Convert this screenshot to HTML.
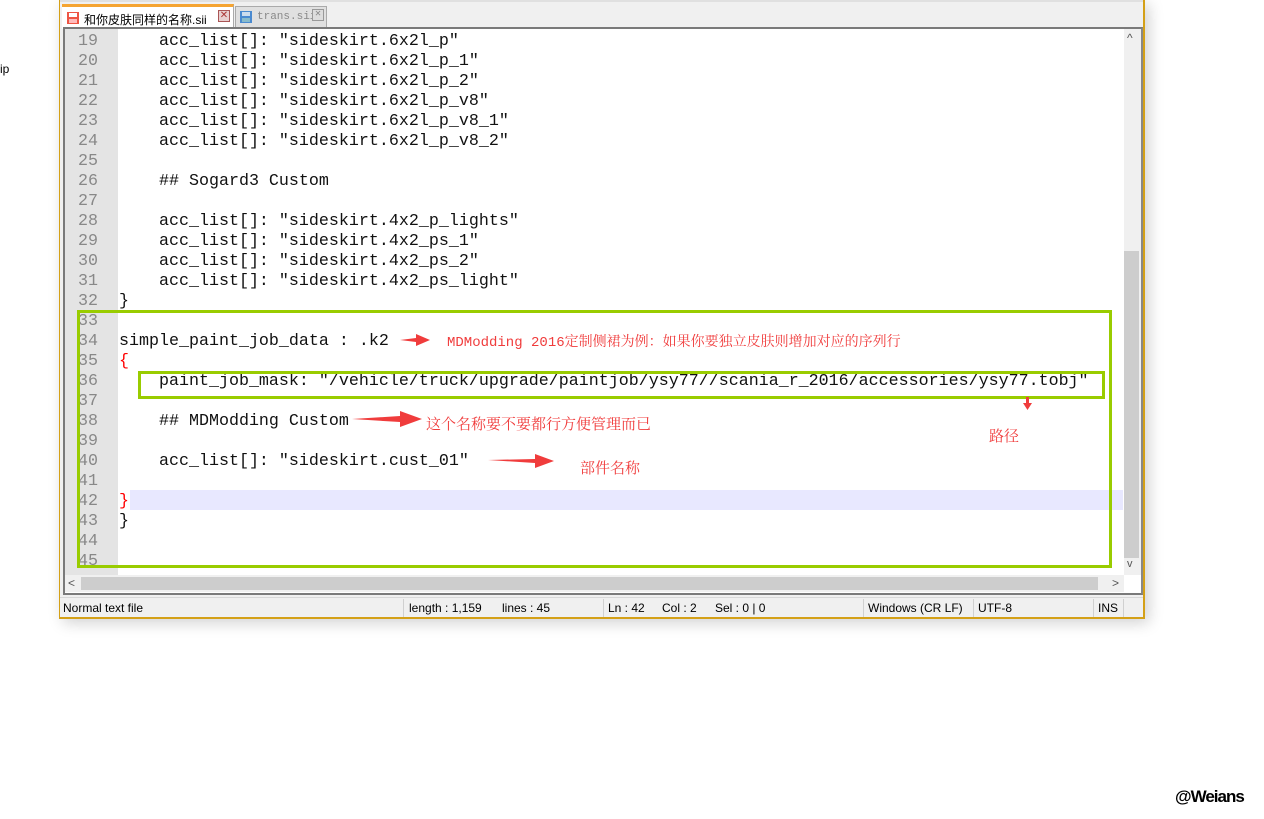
<!DOCTYPE html>
<html><head><meta charset="utf-8"><style>
*{margin:0;padding:0;box-sizing:border-box}
body{width:1264px;height:819px;background:#fff;position:relative;overflow:hidden;font-family:"Liberation Sans","Noto Sans CJK SC",sans-serif}
.win{position:absolute;left:59px;top:0;width:1086px;height:619px;background:#f0f0f0;border-left:1px solid #d4a017;border-right:2px solid #d4a017;border-bottom:2px solid #d4a017;box-shadow:4px 4px 14px rgba(0,0,0,.18)}
.tab1{position:absolute;left:62px;top:4px;width:172px;height:25px;background:#fff;border-top:3px solid #f5a431;border-right:1px solid #aaa;font-size:12px;color:#000}
.tab2{position:absolute;left:235px;top:6px;width:92px;height:22px;background:#e0e0e0;border:1px solid #aaa;font-family:"Liberation Mono",monospace;font-size:11px;color:#888}
.frame{position:absolute;left:63px;top:27px;width:1080px;height:568px;border:2px solid #7a7a7a;border-right-color:#888;background:#fff}
.gut{position:absolute;left:65px;top:29px;width:53px;height:546px;background:#e4e4e4}
.ln{position:absolute;font-family:"Liberation Mono",monospace;font-size:16.67px;line-height:20px;white-space:pre;color:#111}
.num{color:#888;left:78px}
.code{left:119px}
.hl{position:absolute;left:130px;top:490px;width:993px;height:20px;background:#e8e8ff}
.vs{position:absolute;left:1124px;top:29px;width:17px;height:546px;background:#f0f0f0}
.th{position:absolute;left:1124px;top:251px;width:15px;height:307px;background:#cdcdcd}
.hs{position:absolute;left:65px;top:575px;width:1059px;height:17px;background:#f0f0f0}
.hth{position:absolute;left:81px;top:577px;width:1017px;height:13px;background:#cdcdcd}
.status{position:absolute;left:60px;top:597px;width:1083px;height:20px;font-size:12px;color:#000;border-top:1px solid #d8d8d8}
.status span{position:absolute;top:3px}
.sep{position:absolute;top:1px;width:1px;height:18px;background:#d0d0d0}
.box{position:absolute;border:3px solid #99cc00}
.red{position:absolute;color:#f03c3c;font-size:14px;font-family:"Liberation Mono","Noto Serif CJK SC",serif;white-space:nowrap}
</style></head><body>
<div style="position:absolute;left:0;top:62px;font-size:12px">ip</div>
<div class="win"></div>
<div style="position:absolute;left:60px;top:0;width:1083px;height:2px;background:#e0e0e0"></div>
<div class="tab1"><svg style="position:absolute;left:4px;top:4px" width="14" height="14"><rect x="1" y="1" width="12" height="12" fill="#e54" /><rect x="3" y="2" width="8" height="4" fill="#fff"/><rect x="3" y="8" width="8" height="4" fill="#fbb"/></svg><span style="position:absolute;left:22px;top:4px">和你皮肤同样的名称.sii</span><span style="position:absolute;left:156px;top:3px;width:12px;height:12px;border:1px solid #a55;background:#e8d0d0;font-size:10px;line-height:10px;text-align:center;color:#a33">✕</span></div>
<div class="tab2"><svg style="position:absolute;left:3px;top:3px" width="14" height="14"><rect x="1" y="1" width="12" height="12" fill="#4a8ad0"/><rect x="3" y="2" width="8" height="4" fill="#cde"/><rect x="3" y="8" width="8" height="4" fill="#8bc"/></svg><span style="position:absolute;left:21px;top:4px">trans.sii</span><span style="position:absolute;left:76px;top:2px;width:12px;height:12px;border:1px solid #999;background:#ddd;font-size:10px;line-height:10px;text-align:center;color:#888">✕</span></div>
<div class="frame"></div>
<div class="gut"></div>
<div class="hl"></div>
<div class="vs"></div><div class="th"></div>
<div style="position:absolute;left:1127px;top:31px;font-size:12px;color:#555">^</div>
<div style="position:absolute;left:1127px;top:558px;font-size:11px;color:#555">v</div>
<div class="hs"></div><div class="hth"></div>
<div style="position:absolute;left:68px;top:576px;font-size:12px;color:#555">&lt;</div>
<div style="position:absolute;left:1112px;top:576px;font-size:12px;color:#555">&gt;</div>
<div class="ln num" style="top:32px">19
20
21
22
23
24
25
26
27
28
29
30
31
32
33
34
35
36
37
38
39
40
41
42
43
44
45</div>
<div class="ln code" style="top:32px">    acc_list[]: "sideskirt.6x2l_p"
    acc_list[]: "sideskirt.6x2l_p_1"
    acc_list[]: "sideskirt.6x2l_p_2"
    acc_list[]: "sideskirt.6x2l_p_v8"
    acc_list[]: "sideskirt.6x2l_p_v8_1"
    acc_list[]: "sideskirt.6x2l_p_v8_2"

    ## Sogard3 Custom

    acc_list[]: "sideskirt.4x2_p_lights"
    acc_list[]: "sideskirt.4x2_ps_1"
    acc_list[]: "sideskirt.4x2_ps_2"
    acc_list[]: "sideskirt.4x2_ps_light"
}

simple_paint_job_data : .k2
<span style="color:#f00">{</span>
    paint_job_mask: "/vehicle/truck/upgrade/paintjob/ysy77//scania_r_2016/accessories/ysy77.tobj"

    ## MDModding Custom

    acc_list[]: "sideskirt.cust_01"

<span style="color:#f00">}</span>
}</div>
<div class="box" style="left:77px;top:310px;width:1035px;height:258px"></div>
<div class="box" style="left:138px;top:371px;width:967px;height:28px"></div>
<svg style="position:absolute;left:0;top:0" width="1264" height="819">
<g fill="#f03c3c">
<path d="M400 340 L416 338 L416 334 L430 340 L416 346 L416 342 Z"/>
<path d="M352 419 L400 416 L400 411 L422 419 L400 427 L400 422 Z"/>
<path d="M488 460 L535 459 L535 454 L554 461 L535 468 L535 463 Z"/>
<path d="M1026 397 L1029 397 L1029 403 L1032 403 L1027.5 410 L1023 403 L1026 403 Z"/>
</g></svg>
<div class="red" style="left:447px;top:331px">MDModding 2016定制侧裙为例：如果你要独立皮肤则增加对应的序列行</div>
<div class="red" style="left:426px;top:413px;font-size:15px">这个名称要不要都行方便管理而已</div>
<div class="red" style="left:989px;top:425px;font-size:15px">路径</div>
<div class="red" style="left:580px;top:457px;font-size:15px">部件名称</div>
<div class="status">
<span style="left:3px">Normal text file</span>
<div class="sep" style="left:343px"></div>
<span style="left:349px">length : 1,159</span><span style="left:442px">lines : 45</span>
<div class="sep" style="left:543px"></div>
<span style="left:548px">Ln : 42</span><span style="left:602px">Col : 2</span><span style="left:655px">Sel : 0 | 0</span>
<div class="sep" style="left:803px"></div>
<span style="left:808px">Windows (CR LF)</span>
<div class="sep" style="left:913px"></div>
<span style="left:918px">UTF-8</span>
<div class="sep" style="left:1033px"></div>
<span style="left:1038px">INS</span>
<div class="sep" style="left:1063px"></div>
</div>
<div style="position:absolute;left:1175px;top:787px;font-size:17px;font-weight:bold;color:#000;letter-spacing:-1px">@Weians</div>
</body></html>
